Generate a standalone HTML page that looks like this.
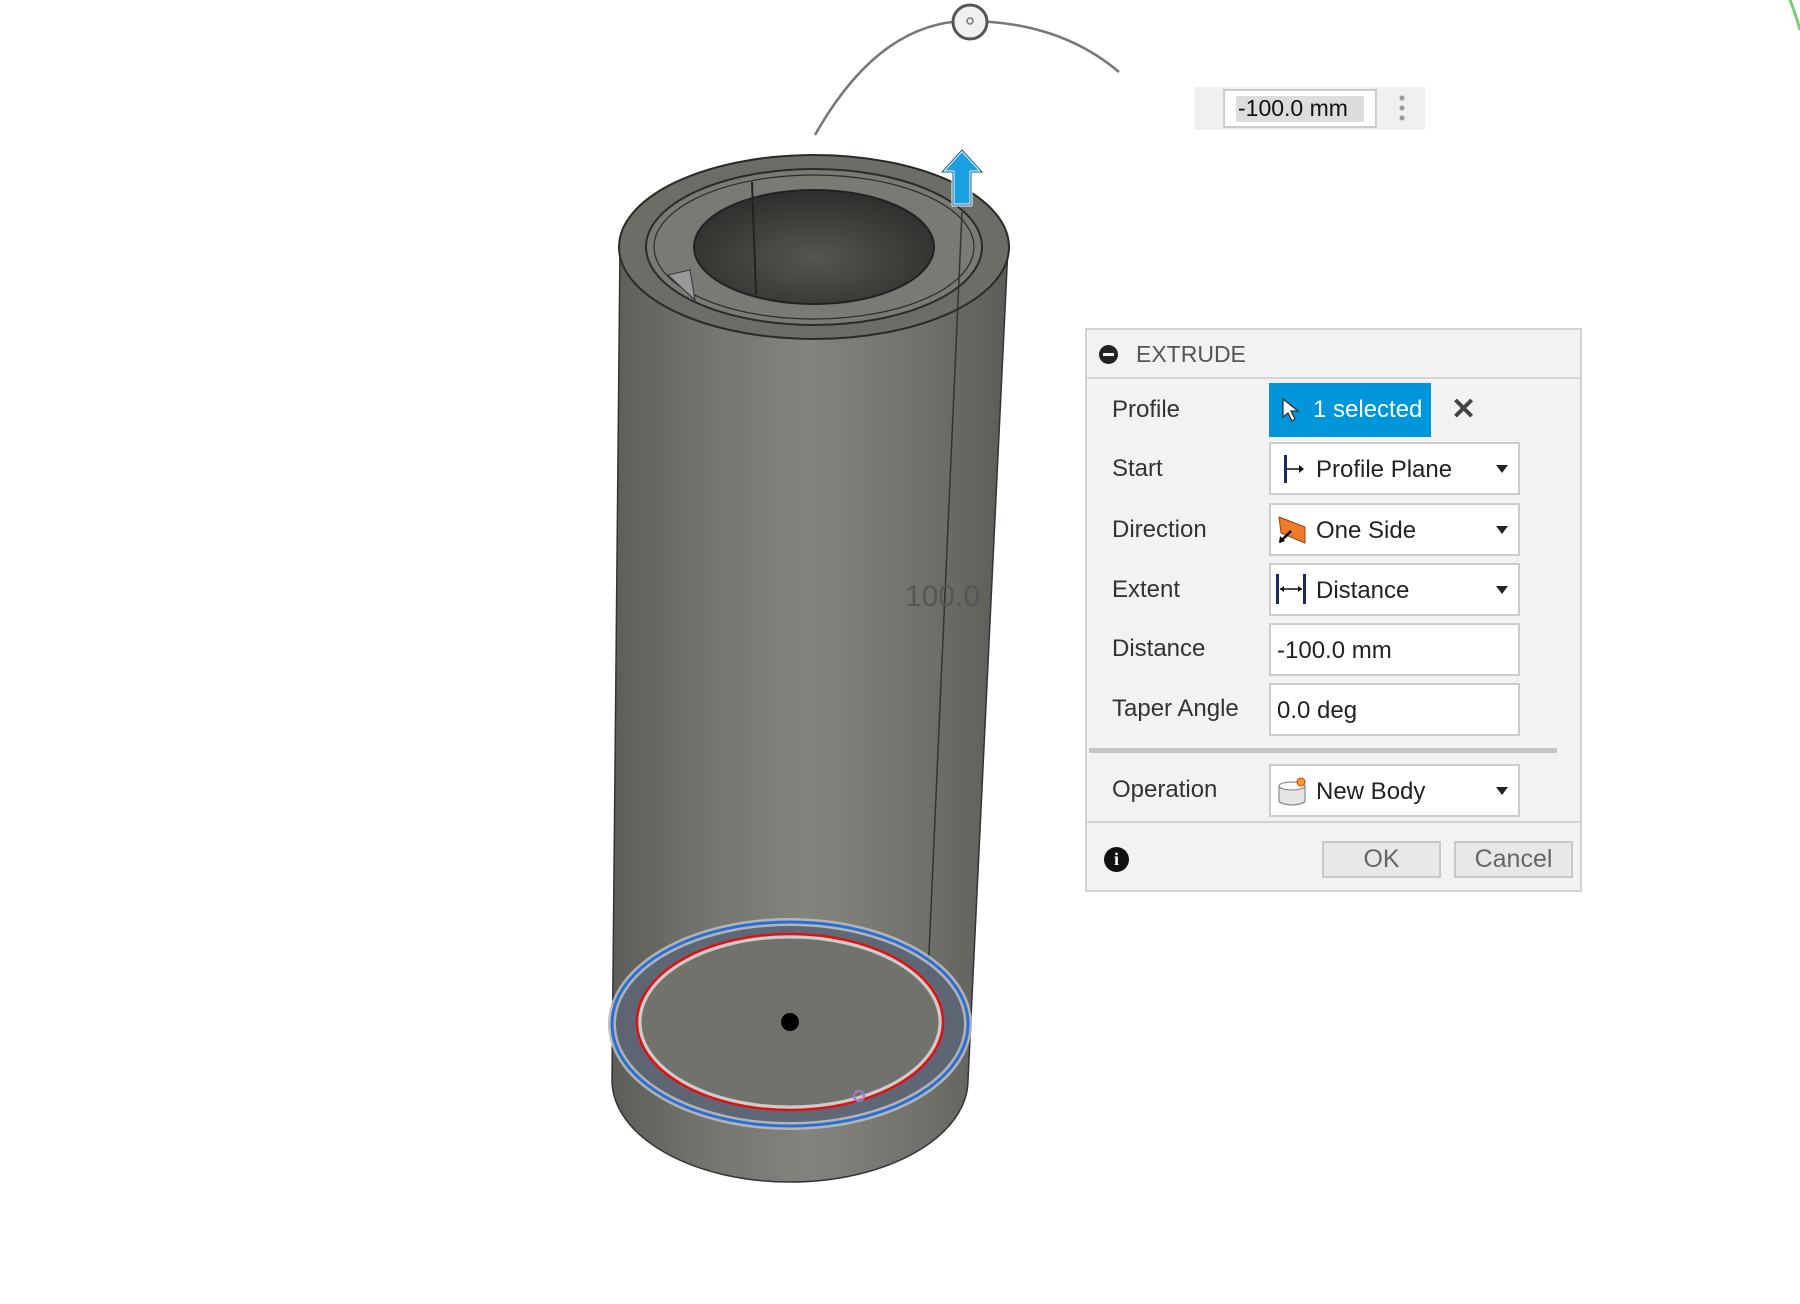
<!DOCTYPE html>
<html><head><meta charset="utf-8"><style>
body{margin:0;width:1800px;height:1304px;background:#fff;position:relative;overflow:hidden;font-family:"Liberation Sans",sans-serif;}
svg.vp{position:absolute;left:0;top:0}
.dlg{position:absolute;left:1085px;top:328px;width:497px;height:564px;background:#f2f2f2;border:2px solid #d2d2d2;box-sizing:border-box}
.hdr{position:absolute;left:0;top:0;right:0;height:47px;border-bottom:2px solid #d4d4d4;}
.hdr span{position:absolute;left:49px;top:11px;font-size:23px;color:#555}
.hdr i{position:absolute;left:12px;top:15px;width:19px;height:19px;border-radius:50%;background:#222}
.hdr i:after{content:"";position:absolute;left:4px;top:8px;width:11px;height:3px;background:#f2f2f2}
.lbl{position:absolute;left:25px;font-size:24px;color:#333;line-height:28px}
.fld{position:absolute;left:182px;width:251px;height:53px;background:#fff;border:2px solid #ccc;box-sizing:border-box;font-size:24px;color:#222}
.fld span{position:absolute;left:45px;top:12px}
.fld.t span{left:6px}
.fld .dd{position:absolute;right:10px;top:21px;width:0;height:0;border-left:6px solid transparent;border-right:6px solid transparent;border-top:8px solid #222}
.sel{position:absolute;left:182px;top:53px;width:162px;height:54px;background:#0096d9;color:#fff;font-size:24px}
.btn{position:absolute;top:511px;height:37px;background:#e8e8e8;border:2px solid #c8c8c8;box-sizing:border-box;font-size:25px;color:#666;text-align:center;line-height:33px}
</style></head><body>
<svg class="vp" width="1800" height="1304" viewBox="0 0 1800 1304">
<defs>
<linearGradient id="bg" x1="0" x2="1"><stop offset="0" stop-color="#5e5e58"/><stop offset="0.25" stop-color="#75756f"/><stop offset="0.5" stop-color="#84847e"/><stop offset="0.8" stop-color="#70706a"/><stop offset="1" stop-color="#5c5c56"/></linearGradient>
<radialGradient id="hole" cx="0.5" cy="0.6" r="0.6"><stop offset="0" stop-color="#555550"/><stop offset="1" stop-color="#2e2e2c"/></radialGradient>
</defs>
<path d="M815 135 Q880 20 970 21 Q1060 22 1119 72" fill="none" stroke="#555" stroke-width="2.5" opacity="0.8"/>
<circle cx="970" cy="22" r="17" fill="#f0f0f0" stroke="#555" stroke-width="3"/>
<circle cx="970" cy="21" r="3" fill="none" stroke="#777" stroke-width="1.5"/>
<path d="M620 247 L612 1080 A178 102 0 0 0 968 1080 L1008 247 Z" fill="url(#bg)" stroke="#333" stroke-width="1.5"/>
<ellipse cx="814" cy="247" rx="195" ry="92" fill="#6d6d67" stroke="#2a2a28" stroke-width="2"/>
<ellipse cx="814" cy="247" rx="168" ry="78" fill="#7a7a74" stroke="#2a2a28" stroke-width="2"/>
<ellipse cx="814" cy="247" rx="160" ry="72" fill="none" stroke="#2a2a28" stroke-width="1.2"/>
<ellipse cx="814" cy="247" rx="120" ry="57" fill="url(#hole)" stroke="#222" stroke-width="2"/>
<line x1="752" y1="182" x2="756" y2="295" stroke="#222" stroke-width="2"/>
<path d="M668 275 L690 270 L695 300 Z" fill="#999" stroke="#333"/>
<line x1="962" y1="212" x2="928" y2="976" stroke="#333" stroke-width="1.5"/>
<text x="905" y="606" font-size="30" fill="#555" font-family="Liberation Sans">100.0</text>
<ellipse cx="790" cy="1024" rx="178" ry="102" fill="#5c6674" opacity="0.9" stroke="#bbb" stroke-width="8"/>
<ellipse cx="790" cy="1024" rx="178" ry="102" fill="none" stroke="#2a6fd6" stroke-width="3"/>
<ellipse cx="790" cy="1022" rx="151" ry="86" fill="#72726c" stroke="#ccc" stroke-width="5"/>
<ellipse cx="790" cy="1022" rx="153" ry="88" fill="none" stroke="#e01010" stroke-width="2.5"/>
<circle cx="790" cy="1022" r="9" fill="#000"/>
<circle cx="859" cy="1096" r="5" fill="none" stroke="#a07ad0" stroke-width="2"/>
<path d="M962 150 L982 172 L971 172 L971 205 L953 205 L953 172 L942 172 Z" fill="#1aa0e0" stroke="#fff" stroke-width="3" stroke-linejoin="round"/>
<path d="M962 150 L982 172 L971 172 L971 205 L953 205 L953 172 L942 172 Z" fill="none" stroke="#0a5a8a" stroke-width="1"/>
<rect x="1195" y="87" width="230" height="43" fill="#f0f0f0"/>
<rect x="1224" y="90" width="152" height="37" fill="#fff" stroke="#ccc" stroke-width="2"/>
<rect x="1236" y="96" width="128" height="26" fill="#ddd"/>
<text x="1238" y="116" font-size="23" fill="#111">-100.0 mm</text>
<circle cx="1402" cy="98" r="2.5" fill="#999"/><circle cx="1402" cy="108" r="2.5" fill="#999"/><circle cx="1402" cy="118" r="2.5" fill="#999"/>
<path d="M1790 0 Q1796 15 1800 30" stroke="#7c7" stroke-width="3" fill="none"/>
</svg>
<div class="dlg">
 <div class="hdr"><i></i><span>EXTRUDE</span></div>
 <div class="lbl" style="top:66px">Profile</div>
 <div class="sel"><svg style="position:absolute;left:12px;top:14px" width="20" height="26"><path d="M2 2 L2 20 L7 16 L11 24 L14 22 L10 14 L17 14 Z" fill="#fff" stroke="#333" stroke-width="1.3"/></svg><span style="position:absolute;left:44px;top:13px">1 selected</span></div>
 <div style="position:absolute;left:364px;top:62px;font-size:30px;color:#444;font-weight:bold">✕</div>
 <div class="lbl" style="top:125px">Start</div>
 <div class="fld" style="top:112px"><svg style="position:absolute;left:12px;top:11px" width="22" height="30"><rect x="1" y="0" width="3" height="28" fill="#1a2a5a"/><line x1="4" y1="14" x2="17" y2="14" stroke="#111" stroke-width="1.5"/><path d="M16 10 L21 14 L16 18Z" fill="#111"/></svg><span>Profile Plane</span><i class="dd"></i></div>
 <div class="lbl" style="top:186px">Direction</div>
 <div class="fld" style="top:173px"><svg style="position:absolute;left:6px;top:10px" width="32" height="30"><path d="M2 2 L28 12 L28 28 L4 18 Z" fill="#f07a2a" stroke="#a04010"/><path d="M14 16 L3 27" stroke="#000" stroke-width="2.5"/><path d="M2 28 L3 21 L8 26Z" fill="#000"/></svg><span>One Side</span><i class="dd"></i></div>
 <div class="lbl" style="top:246px">Extent</div>
 <div class="fld" style="top:233px"><svg style="position:absolute;left:4px;top:9px" width="34" height="32"><rect x="1" y="0" width="3" height="30" fill="#1a2a5a"/><rect x="28" y="0" width="3" height="30" fill="#1a2a5a"/><line x1="5" y1="15" x2="27" y2="15" stroke="#111" stroke-width="1.5"/><path d="M5 15 L9 12 L9 18Z M27 15 L23 12 L23 18Z" fill="#111"/></svg><span>Distance</span><i class="dd"></i></div>
 <div class="lbl" style="top:305px">Distance</div>
 <div class="fld t" style="top:293px"><span>-100.0 mm</span></div>
 <div class="lbl" style="top:365px">Taper Angle</div>
 <div class="fld t" style="top:353px"><span>0.0 deg</span></div>
 <div style="position:absolute;left:2px;top:418px;width:468px;height:5px;background:#c4c4c4"></div>
 <div class="lbl" style="top:446px">Operation</div>
 <div class="fld" style="top:434px"><svg style="position:absolute;left:6px;top:10px" width="32" height="32"><path d="M2 10 L2 26 Q15 32 28 26 L28 10 Z" fill="#e6e6e6" stroke="#777"/><ellipse cx="15" cy="10" rx="13" ry="4" fill="#fafafa" stroke="#777"/><circle cx="24" cy="6" r="4" fill="#f5a020" stroke="#e03010"/></svg><span>New Body</span><i class="dd"></i></div>
 <div style="position:absolute;left:0;right:0;top:491px;height:2px;background:#d2d2d2"></div>
 <div style="position:absolute;left:17px;top:517px;width:25px;height:25px;border-radius:50%;background:#111;color:#fff;font-weight:bold;font-size:18px;text-align:center;line-height:25px;font-family:'Liberation Serif',serif">i</div>
 <div class="btn" style="left:235px;width:119px">OK</div>
 <div class="btn" style="left:367px;width:119px">Cancel</div>
</div>
</body></html>
